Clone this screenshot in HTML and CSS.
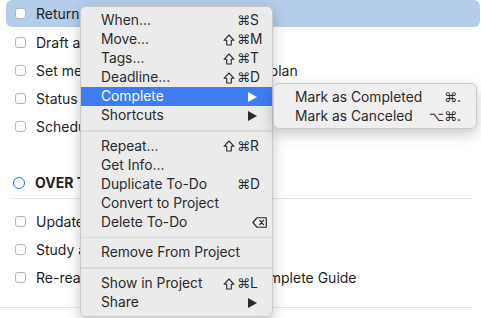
FILE: index.html
```html
<!DOCTYPE html>
<html>
<head>
<meta charset="utf-8">
<link rel="stylesheet" href="styles.css">
</head>
<body>
<div class="page">
  <div class="group">
    <div class="row selected"><span class="cb"></span><span class="label">Return books</span></div>
    <div class="row"><span class="cb"></span><span class="label">Draft agenda</span></div>
    <div class="row"><span class="cb"></span><span class="label">Set meeting with Ana to review the plan</span></div>
    <div class="row"><span class="cb"></span><span class="label">Status report</span></div>
    <div class="row"><span class="cb"></span><span class="label">Schedule call</span></div>
  </div>
  <div class="heading"><span class="ring"></span><span class="htext">OVER THE WEEKEND</span></div>
  <div class="group lower">
    <div class="row"><span class="cb"></span><span class="label">Update resume</span></div>
    <div class="row"><span class="cb"></span><span class="label">Study a language</span></div>
    <div class="row"><span class="cb"></span><span class="label">Re-read Getting Things Done: A Complete Guide</span></div>
  </div>
  <div class="endline"></div>
</div>

<div class="menu">
  <div class="item"><span class="name">When…</span><span class="cmd">⌘</span><span class="key">S</span></div>
  <div class="item"><span class="name">Move…</span><svg class="shift" width="12" height="12" viewBox="0 0 12 12"><path d="M6 1 L11 6.3 H8.3 V11 H3.7 V6.3 H1 Z" fill="none" stroke="#2a2a2a" stroke-width="1.1" stroke-linejoin="round"/></svg><span class="cmd">⌘</span><span class="key">M</span></div>
  <div class="item"><span class="name">Tags…</span><svg class="shift" width="12" height="12" viewBox="0 0 12 12"><path d="M6 1 L11 6.3 H8.3 V11 H3.7 V6.3 H1 Z" fill="none" stroke="#2a2a2a" stroke-width="1.1" stroke-linejoin="round"/></svg><span class="cmd">⌘</span><span class="key">T</span></div>
  <div class="item"><span class="name">Deadline…</span><svg class="shift" width="12" height="12" viewBox="0 0 12 12"><path d="M6 1 L11 6.3 H8.3 V11 H3.7 V6.3 H1 Z" fill="none" stroke="#2a2a2a" stroke-width="1.1" stroke-linejoin="round"/></svg><span class="cmd">⌘</span><span class="key">D</span></div>
  <div class="item active"><span class="name">Complete</span><span class="arrow"></span></div>
  <div class="item"><span class="name">Shortcuts</span><span class="arrow"></span></div>
  <div class="sep"></div>
  <div class="item"><span class="name">Repeat…</span><svg class="shift" width="12" height="12" viewBox="0 0 12 12"><path d="M6 1 L11 6.3 H8.3 V11 H3.7 V6.3 H1 Z" fill="none" stroke="#2a2a2a" stroke-width="1.1" stroke-linejoin="round"/></svg><span class="cmd">⌘</span><span class="key">R</span></div>
  <div class="item"><span class="name">Get Info…</span></div>
  <div class="item"><span class="name">Duplicate To-Do</span><span class="cmd">⌘</span><span class="key">D</span></div>
  <div class="item"><span class="name">Convert to Project</span></div>
  <div class="item"><span class="name">Delete To-Do</span><svg class="del" width="15" height="11" viewBox="0 0 15 11"><path d="M5 0.75 H14.25 V10.25 H5 L0.9 5.5 Z" fill="none" stroke="#2a2a2a" stroke-width="1.2" stroke-linejoin="round"/><path d="M7.8 3.3 L11.4 7.7 M11.4 3.3 L7.8 7.7" stroke="#2a2a2a" stroke-width="1.2" stroke-linecap="round"/></svg></div>
  <div class="sep"></div>
  <div class="item"><span class="name">Remove From Project</span></div>
  <div class="sep"></div>
  <div class="item"><span class="name">Show in Project</span><svg class="shift" width="12" height="12" viewBox="0 0 12 12"><path d="M6 1 L11 6.3 H8.3 V11 H3.7 V6.3 H1 Z" fill="none" stroke="#2a2a2a" stroke-width="1.1" stroke-linejoin="round"/></svg><span class="cmd">⌘</span><span class="key">L</span></div>
  <div class="item"><span class="name">Share</span><span class="arrow"></span></div>
</div>

<div class="submenu">
  <div class="item"><span class="name">Mark as Completed</span><span class="cmd">⌘</span><span class="key">.</span></div>
  <div class="item"><span class="name">Mark as Canceled</span><span class="opt">⌥</span><span class="cmd">⌘</span><span class="key">.</span></div>
</div>
</body>
</html>
```

FILE: styles.css
```css
html, body {
  margin: 0;
  padding: 0;
  background: #ffffff;
}
body {
  width: 481px;
  height: 318px;
  overflow: hidden;
  position: relative;
  font-family: "Inter", "Liberation Sans", sans-serif;
  font-size: 14px;
  color: #1d1d1f;
}
.page {
  display: flex;
  flex-direction: column;
}
.group {
  display: flex;
  flex-direction: column;
  margin: 0 1px 0 6px;
}
.row {
  height: 28px;
  display: flex;
  align-items: center;
  gap: 10px;
  padding-left: 9px;
  white-space: nowrap;
}
.row.selected {
  background: #b4cdeb;
  border-radius: 6px;
  height: 27px;
  margin-bottom: 1px;
}
.cb {
  width: 9px;
  height: 9px;
  border: 1px solid #b5b5b5;
  border-radius: 3px;
  background: #fff;
  flex: none;
}
.heading {
  margin: 28px 8px 0 13px;
  height: 29px;
  border-bottom: 1px solid #e4e4e4;
  display: flex;
  align-items: center;
  gap: 10px;
  padding-bottom: 1px;
}
.ring {
  width: 10px;
  height: 10px;
  border: 1.6px solid #1b6fe6;
  border-radius: 50%;
  flex: none;
}
.htext {
  font-weight: 700;
  color: #222;
}
.lower {
  margin-top: 8px;
}
.endline {
  margin-top: 16px;
  width: 472px;
  height: 1px;
  background: #e4e4e4;
}

/* menus */
.menu, .submenu {
  position: absolute;
  box-sizing: border-box;
  background: #ebebeb;
  border: 1px solid #c9c9c9;
  border-radius: 6px;
  box-shadow: 0 5px 14px rgba(0, 0, 0, 0.22);
  padding: 4px 0;
  color: #2a2a2a;
  display: flex;
  flex-direction: column;
}
.menu {
  left: 80px;
  top: 6px;
  width: 193px;
  height: 311px;
}
.submenu {
  left: 273px;
  top: 83px;
  width: 204px;
  height: 46px;
  background: #efefef;
}
.item {
  height: 19px;
  line-height: 19px;
  display: flex;
  align-items: center;
  padding: 0 10px 0 20px;
  white-space: nowrap;
  font-size: 13.8px;
}
.submenu .item {
  padding: 0 7px 0 21px;
}
.item.active {
  background: #3c7df4;
  color: #ffffff;
}
.name {
  flex: 1;
}
.shift {
  margin-right: 2px;
  flex: none;
}
.cmd, .opt {
  font-family: "DejaVu Sans", sans-serif;
  font-size: 13px;
  width: 13px;
  text-align: left;
}
.opt {
  margin-right: 2px;
}
.key {
  width: 12px;
  text-align: left;
}
.arrow {
  width: 0;
  height: 0;
  border-left: 9px solid #2a2a2a;
  border-top: 5px solid transparent;
  border-bottom: 5px solid transparent;
  margin-right: 5px;
}
.item.active .arrow {
  border-left-color: #ffffff;
}
.del {
  margin-right: -5px;
}
.sep {
  height: 2px;
  margin: 5px 0 5px;
  background: #d9d9d9;
}
```
